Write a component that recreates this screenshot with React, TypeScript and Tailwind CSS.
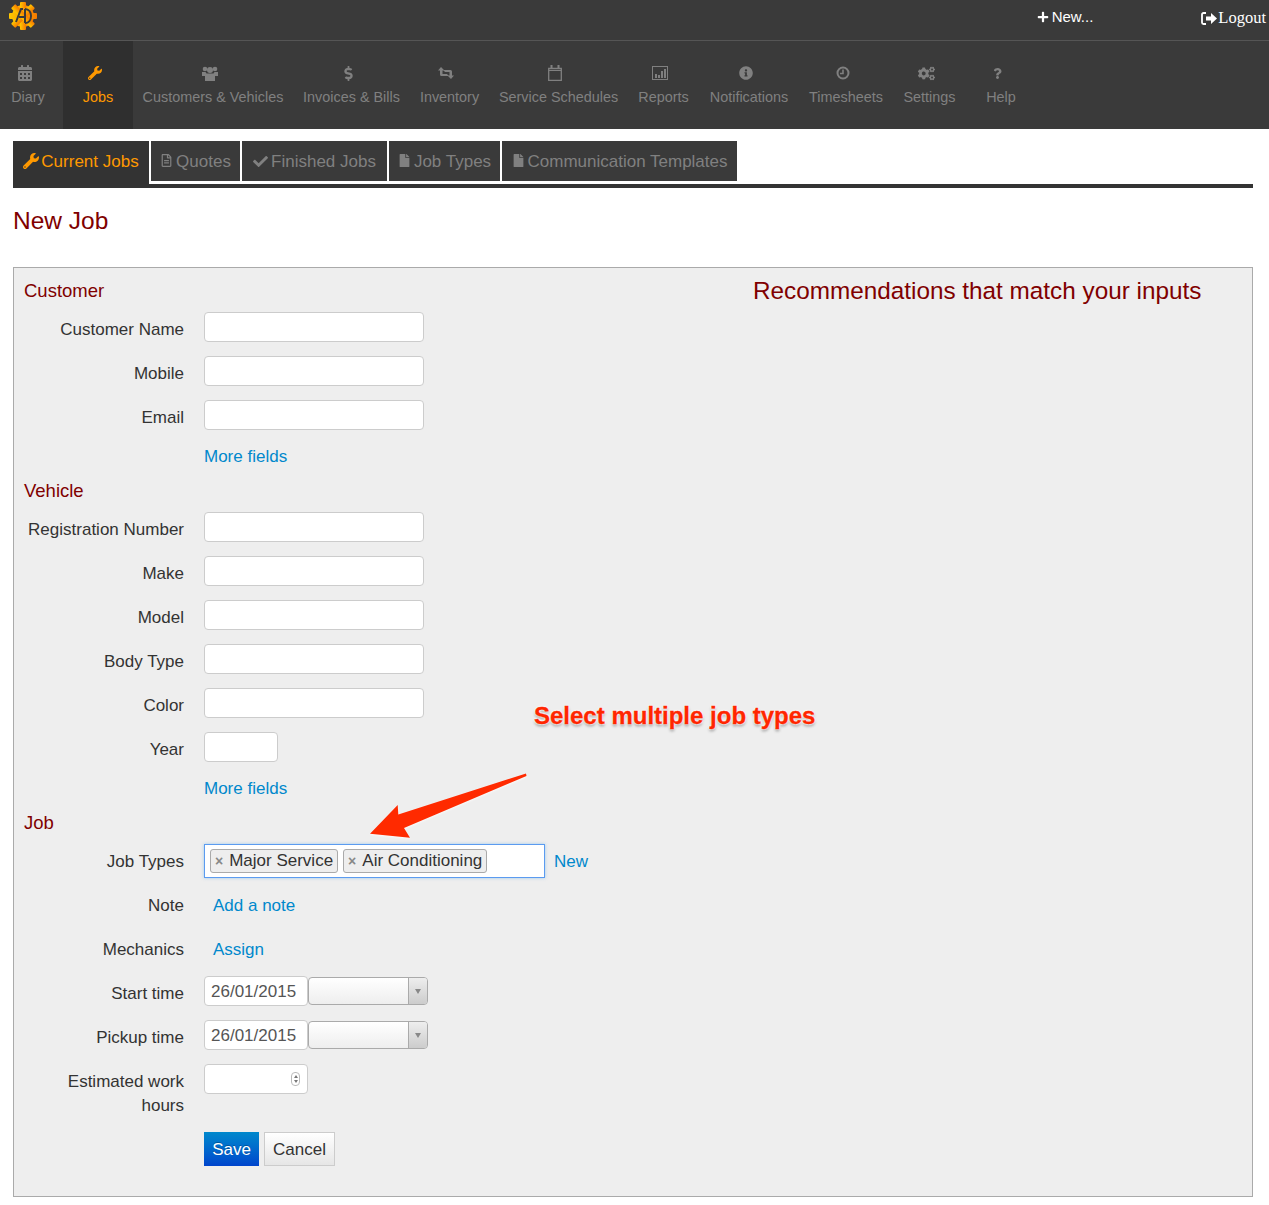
import React from 'react';
import {
  FaCalendarAlt, FaWrench, FaDollarSign, FaInfoCircle,
  FaCogs, FaQuestion, FaPlus, FaCheck, FaFile, FaRegFileAlt,
} from 'react-icons/fa';

const UsersIcon = () => (
  <svg width="16" height="15" viewBox="0 0 16 15" fill="currentColor">
    <circle cx="3" cy="3" r="2.300" />
    <circle cx="13" cy="3" r="2.300" />
    <circle cx="8" cy="4" r="3" />
    <path d="M0 6h3.500l1 1.500h7l1-1.500H16v4h-3v5H3v-5H0z" />
  </svg>
);

const InventoryIcon = () => (
  <svg width="16" height="12" viewBox="0 0 16 12" fill="currentColor">
    <path d="M3 0l3.500 3.500H4.500V7H9l1.800 2H3.500a1.500 1.500 0 0 1-1.500-1.500v-4H0z" />
    <path d="M13 12L9.500 8.500h2V5H7L5.200 3h7.300A1.500 1.500 0 0 1 14 4.500v4h2z" />
  </svg>
);

const ScheduleIcon = () => (
  <svg width="14" height="16" viewBox="0 0 14 16" fill="none" stroke="currentColor">
    <path d="M.7 3.500h12.600v11.800H.7z" strokeWidth="1.300" />
    <path d="M3.500 0v4M10.500 0v4" strokeWidth="2" />
    <path d="M1 5.500h12" strokeWidth="1" />
  </svg>
);

const ReportsIcon = () => (
  <svg width="16" height="14" viewBox="0 0 16 14" fill="currentColor">
    <path fillRule="evenodd" d="M0 0h16v14H0zM1 1v12h14V1z" />
    <path d="M3 8h2v4H3zM6 9h2v3H6zM9 5h2v7H9zM12 3h2v9h-2z" />
  </svg>
);

const ClockIcon = () => (
  <svg width="14" height="14" viewBox="0 0 14 14" fill="none" stroke="currentColor" strokeWidth="2">
    <circle cx="7" cy="7" r="5.500" />
    <path d="M7 3.500V7.500H4" strokeWidth="1.600" />
  </svg>
);

const LogoutIcon = () => (
  <svg width="16" height="13" viewBox="0 0 16 13" fill="white">
    <path d="M5 1H2.500A1.500 1.500 0 0 0 1 2.500v8A1.500 1.500 0 0 0 2.500 12H5" fill="none" stroke="white" strokeWidth="1.800" />
    <path d="M5 4.500h5V1l6 5.500-6 5.500V8.500H5z" />
  </svg>
);

const Logo = () => (
  <svg width="30" height="30" viewBox="0 0 30 30">
    <defs>
      <linearGradient id="logoGrad" x1="0" y1="0" x2="1" y2="0">
        <stop offset="0" stopColor="#ffc800" />
        <stop offset="1" stopColor="#f57a00" />
      </linearGradient>
    </defs>
    <g fill="url(#logoGrad)">
      <circle cx="15" cy="15" r="11" />
      <rect x="12" y="1" width="6" height="28" rx="1" />
      <rect x="1" y="12" width="28" height="6" rx="1" />
      <rect x="12" y="1" width="6" height="28" rx="1" transform="rotate(45 15 15)" />
      <rect x="12" y="1" width="6" height="28" rx="1" transform="rotate(-45 15 15)" />
    </g>
    <path d="M8 21 13 8h2M11 16h5M17 8v14M17 8c8 0 8 14 0 14" fill="none" stroke="#3a3a3a" strokeWidth="2" />
  </svg>
);

const navItems = [
  { label: 'Diary', icon: <FaCalendarAlt size={16} />, cls: 'w-[63px] pr-[7px]' },
  { label: 'Jobs', icon: <FaWrench size={14} />, cls: 'w-[70px]', active: true },
  { label: 'Customers & Vehicles', icon: <UsersIcon />, cls: 'w-[160px]' },
  { label: 'Invoices & Bills', icon: <FaDollarSign size={15} />, cls: 'w-[117px]' },
  { label: 'Inventory', icon: <InventoryIcon />, cls: 'w-[79px]' },
  { label: 'Service Schedules', icon: <ScheduleIcon />, cls: 'w-[139px]' },
  { label: 'Reports', icon: <ReportsIcon />, cls: 'w-[71px]' },
  { label: 'Notifications', icon: <FaInfoCircle size={14} />, cls: 'w-[100px]' },
  { label: 'Timesheets', icon: <ClockIcon />, cls: 'w-[94px]' },
  { label: 'Settings', icon: <FaCogs size={17} />, cls: 'w-[73px]' },
  { label: 'Help', icon: <FaQuestion size={11} />, cls: 'w-[70px]' },
];

const tabs = [
  { label: 'Quotes', icon: <FaRegFileAlt size={13} />, cls: 'w-[89px]' },
  { label: 'Finished Jobs', icon: <FaCheck size={15} />, cls: 'w-[145px]' },
  { label: 'Job Types', icon: <FaFile size={13} />, cls: 'w-[111px]' },
  { label: 'Communication Templates', icon: <FaFile size={13} />, cls: 'w-[235px]' },
];

const Heading = ({ children }: { children: React.ReactNode }) => (
  <h3 className="h-[24px] pt-[1px] leading-6 text-[18.5px] text-[#800000] mb-[10px]">{children}</h3>
);

const Row = ({ label, mb = 'mb-[14px]', children }: { label: string; mb?: string; children: React.ReactNode }) => (
  <div className={`flex items-start gap-[20px] ${mb}`}>
    <label className="w-[160px] shrink-0 pt-[6px] text-right text-[17px] leading-6 text-[#333]">{label}</label>
    {children}
  </div>
);

const TextInput = ({ width = 'w-[220px]', value }: { width?: string; value?: string }) => (
  <input
    type="text"
    defaultValue={value}
    className={`${width} h-[30px] bg-white border border-[#ccc] rounded-[4px] pl-[6px] pt-[1px] text-[17px] text-[#555] outline-none`}
  />
);

const MoreFields = () => (
  <div className="h-[24px] pt-[1px] mb-[10px] pl-[180px] leading-6 text-[17px] text-[#0088cc]">More fields</div>
);

const Tag = ({ children }: { children: React.ReactNode }) => (
  <span className="h-[24px] flex items-center gap-[6px] pl-[4px] pr-[4px] bg-[#eee] border border-[#aaa] rounded-[3px] text-[17px] text-[#333]">
    <span className="text-[#888] font-bold text-[14px] leading-none">×</span>
    {children}
  </span>
);

const TimeSelect = () => (
  <div className="mt-[1px] w-[120px] h-[28px] flex border border-[#aaa] rounded-[4px] overflow-hidden bg-gradient-to-b from-white to-[#eee]">
    <div className="flex-1" />
    <div className="w-[19px] border-l border-[#aaa] flex items-center justify-center bg-gradient-to-b from-[#eee] to-[#ccc]">
      <span className="w-0 h-0 border-x-[3px] border-x-transparent border-t-[5px] border-t-[#888]" />
    </div>
  </div>
);

const App = () => {
  return (
    <div className="min-h-[1205px] bg-white font-['Liberation_Sans',sans-serif]">
      <header className="bg-[#3a3a3a]">
        <div className="h-[41px] border-b border-[#555] flex items-start">
          <div className="ml-[8px] mt-[1px]"><Logo /></div>
          <div className="ml-auto flex items-center h-[34px] text-white">
            <span className="flex items-center gap-[3px] text-[15px] mr-[108px]">
              <FaPlus size={12} />New...
            </span>
            <span className="flex items-center gap-[1px] text-[16.500px] font-['Liberation_Serif',serif] mr-[3px] mt-[2px]">
              <LogoutIcon />Logout
            </span>
          </div>
        </div>
        <nav className="h-[88px] flex">
          {navItems.map((item) => (
            <div
              key={item.label}
              className={`${item.cls} flex flex-col items-center pt-[24px] text-[14.400px] ${
                item.active ? 'bg-[#2f2f2f] text-[#ff9900]' : 'text-[#808080]'
              }`}
            >
              <span className="h-[16px] flex items-center mr-[7px]">{item.icon}</span>
              <span className="mt-[6px] leading-[20px] whitespace-nowrap">{item.label}</span>
            </div>
          ))}
        </nav>
      </header>

      <main className="mx-[13px] w-[1240px]">
        <div className="mt-[12px] flex gap-[2px] h-[43px] text-[17px]">
          <div className="w-[136px] h-[43px] bg-[#333] text-[#ff9900] flex items-start justify-center pt-[9px] gap-[2px] leading-6">
            <FaWrench size={16} className="mt-[3px]" />Current Jobs
          </div>
          {tabs.map((t) => (
            <div
              key={t.label}
              className={`${t.cls} h-[40px] bg-[#3a3a3a] text-[#808080] flex items-start justify-center pt-[9px] gap-[3px] leading-6`}
            >
              <span className="mt-[4px]">{t.icon}</span>{t.label}
            </div>
          ))}
        </div>
        <div className="h-[4px] bg-[#333]" />

        <h1 className="mt-[19px] h-[28px] leading-7 text-[24.500px] text-[#800000]">New Job</h1>

        <section className="relative mt-[32px] h-[930px] border border-[#aaa] bg-[#eee] pt-[10px] pl-[10px]">
          <h2 className="absolute left-[739px] top-[9px] text-[24.300px] leading-7 text-[#800000] whitespace-nowrap">
            Recommendations that match your inputs
          </h2>

          <Heading>Customer</Heading>
          <Row label="Customer Name"><TextInput /></Row>
          <Row label="Mobile"><TextInput /></Row>
          <Row label="Email"><TextInput /></Row>
          <MoreFields />

          <Heading>Vehicle</Heading>
          <Row label="Registration Number"><TextInput /></Row>
          <Row label="Make"><TextInput /></Row>
          <Row label="Model"><TextInput /></Row>
          <Row label="Body Type"><TextInput /></Row>
          <Row label="Color"><TextInput /></Row>
          <Row label="Year"><TextInput width="w-[74px]" /></Row>
          <MoreFields />

          <Heading>Job</Heading>
          <Row label="Job Types" mb="mb-[10px]">
            <div className="flex items-center gap-[9px]">
              <div className="w-[341px] h-[34px] bg-white border border-[#5b9bf0] shadow-[0_0_3px_rgba(82,168,236,0.5)] flex items-center gap-[5px] pl-[5px]">
                <Tag>Major Service</Tag>
                <Tag>Air Conditioning</Tag>
              </div>
              <span className="pt-[1px] text-[17px] text-[#0088cc]">New</span>
            </div>
          </Row>
          <Row label="Note">
            <span className="pt-[6px] pl-[9px] text-[17px] leading-6 text-[#0088cc]">Add a note</span>
          </Row>
          <Row label="Mechanics">
            <span className="pt-[6px] pl-[9px] text-[17px] leading-6 text-[#0088cc]">Assign</span>
          </Row>
          <Row label="Start time">
            <div className="flex">
              <TextInput width="w-[104px]" value="26/01/2015" />
              <TimeSelect />
            </div>
          </Row>
          <Row label="Pickup time">
            <div className="flex">
              <TextInput width="w-[104px]" value="26/01/2015" />
              <TimeSelect />
            </div>
          </Row>
          <Row label="Estimated work hours">
            <div className="w-[104px] h-[30px] bg-white border border-[#ccc] rounded-[4px] flex items-center justify-end pr-[7px]">
              <span className="w-[9px] h-[14px] border border-[#bbb] rounded-[4px] flex flex-col items-center justify-center gap-[2px]">
                <span className="w-0 h-0 border-x-[2px] border-x-transparent border-b-[3px] border-b-[#777]" />
                <span className="w-0 h-0 border-x-[2px] border-x-transparent border-t-[3px] border-t-[#777]" />
              </span>
            </div>
          </Row>
          <div className="flex gap-[5px] pl-[180px]">
            <button className="w-[55px] h-[34px] pt-[1px] bg-gradient-to-b from-[#0088cc] to-[#0044cc] text-white text-[17px] [text-shadow:0_-1px_0_rgba(0,0,0,0.25)]">Save</button>
            <button className="w-[71px] h-[34px] pt-[1px] bg-gradient-to-b from-white to-[#e6e6e6] border border-[#ccc] text-[#333] text-[17px]">Cancel</button>
          </div>

          {/* annotation over the form */}
          <div className="absolute left-[520px] top-[434px] text-[24px] font-bold leading-7 text-[#ff2600] whitespace-nowrap [-webkit-text-stroke:0.3px_#ff2600] [text-shadow:0_0_2px_#fff,0_0_2px_#fff,0_0_3px_#fff,0_2px_3px_#888]">
            Select multiple job types
          </div>
          <svg className="absolute left-[340px] top-[490px] drop-shadow-[0_1px_1px_rgba(255,255,255,0.8)]" width="200" height="90" viewBox="0 0 200 90">
            <polygon points="16,75.700 43.700,47 44.300,56.500 172,15.500 172.500,18 50,70 56,79.700" fill="#ff2a00" />
          </svg>
        </section>
      </main>
    </div>
  );
};

export default App;
